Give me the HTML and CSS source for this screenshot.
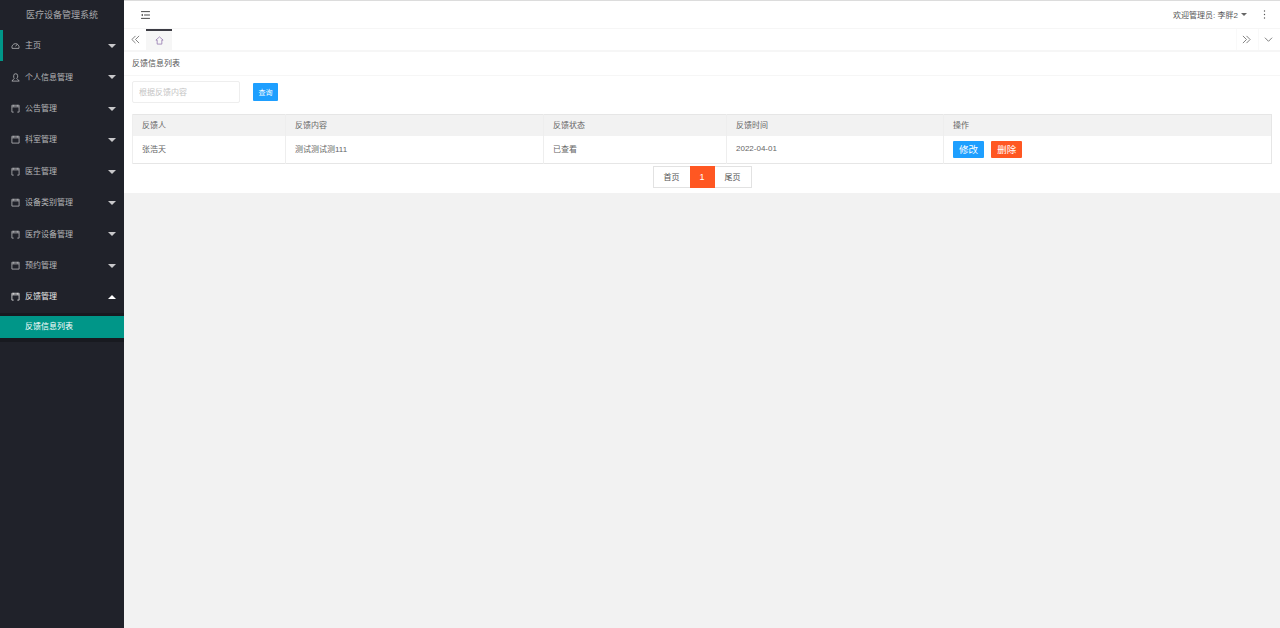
FILE: index.html
```html
<!DOCTYPE html>
<html lang="zh-CN">
<head>
    <meta charset="UTF-8">
    <title>医疗设备管理系统</title>
    <link rel="stylesheet" href="styles.css">
</head>
<body>
    <div class="app">
        <!-- Left menu -->
        <aside class="side">
            <div class="logo">医疗设备管理系统</div>
            <ul class="nav">
                <li class="nav-item first">
                    <svg class="nav-icon" viewBox="0 0 10 10"><path d="M1.200 8.200a4 4 0 1 1 7.600 0zM5 6l2-2.400"/></svg>
                    <span>主页</span><i class="caret"></i>
                </li>
                <li class="nav-item">
                    <svg class="nav-icon" viewBox="0 0 10 10"><path d="M3 4.800V3a2.200 2.200 0 0 1 4.400 0v1.600L6.400 6l2.800 3H1l2.600-3z"/></svg>
                    <span>个人信息管理</span><i class="caret"></i>
                </li>
                <li class="nav-item">
                    <svg class="nav-icon" viewBox="0 0 10 10"><path d="M1 9V1.400M9 9V1.400M1 1.400h8M1 3.200h8M3 1v2M7 1v2M1 9h2M7 9h2"/></svg>
                    <span>公告管理</span><i class="caret"></i>
                </li>
                <li class="nav-item">
                    <svg class="nav-icon" viewBox="0 0 10 10"><path d="M1 9V1.400h8V9zM1 3.200h8M3 1v2M7 1v2"/></svg>
                    <span>科室管理</span><i class="caret"></i>
                </li>
                <li class="nav-item">
                    <svg class="nav-icon" viewBox="0 0 10 10"><path d="M1 9V1.400M9 9V1.400M1 1.400h8M1 3.200h8M3 1v2M7 1v2M1 9h2M7 9h2"/></svg>
                    <span>医生管理</span><i class="caret"></i>
                </li>
                <li class="nav-item">
                    <svg class="nav-icon" viewBox="0 0 10 10"><path d="M1 9V1.400h8V9zM1 3.200h8M3 1v2M7 1v2"/></svg>
                    <span>设备类别管理</span><i class="caret"></i>
                </li>
                <li class="nav-item">
                    <svg class="nav-icon" viewBox="0 0 10 10"><path d="M1 9V1.400M9 9V1.400M1 1.400h8M1 3.200h8M3 1v2M7 1v2M1 9h2M7 9h2"/></svg>
                    <span>医疗设备管理</span><i class="caret"></i>
                </li>
                <li class="nav-item">
                    <svg class="nav-icon" viewBox="0 0 10 10"><path d="M1 9V1.400h8V9zM1 3.200h8M3 1v2M7 1v2"/></svg>
                    <span>预约管理</span><i class="caret"></i>
                </li>
                <li class="nav-item open">
                    <svg class="nav-icon" viewBox="0 0 10 10"><path d="M1 9V1.400M9 9V1.400M1 1.400h8M1 3.200h8M3 1v2M7 1v2M1 9h2M7 9h2"/></svg>
                    <span>反馈管理</span><i class="caret up"></i>
                </li>
                <li class="sub-nav">
                    <div class="sub-item">反馈信息列表</div>
                </li>
            </ul>
        </aside>

        <div class="main">
            <!-- Top bar -->
            <header class="topbar">
                <svg class="fold" viewBox="0 0 10 9"><path d="M0 .7h10M3.400 4.500h6.600M0 8.300h10"/><path class="fold-tip" d="M0 4.500l2-1.500v3z"/></svg>
                <div class="user">
                    <span>欢迎管理员: 李胖2</span><i class="caret small"></i>
                    <svg class="more" viewBox="0 0 3 9"><circle cx="1.500" cy="1" r=".7"/><circle cx="1.500" cy="4.500" r=".7"/><circle cx="1.500" cy="8" r=".7"/></svg>
                </div>
            </header>

            <!-- Tabs -->
            <div class="tabs">
                <div class="tab-arrow">
                    <svg viewBox="0 0 10 10"><path d="M5 1 1 5l4 4M9 1 5 5l4 4"/></svg>
                </div>
                <div class="tab-home">
                    <svg viewBox="0 0 10 10"><path d="M5 1 1 4.600h1.400V9h5.200V4.600H9z"/></svg>
                </div>
                <div class="tabs-right">
                    <div class="tab-btn">
                        <svg viewBox="0 0 10 10"><path d="M1 1l4 4-4 4M5 1l4 4-4 4"/></svg>
                    </div>
                    <div class="tab-btn">
                        <svg viewBox="0 0 10 10"><path d="M1 3l4 4 4-4"/></svg>
                    </div>
                </div>
            </div>

            <!-- Feedback list -->
            <section class="card">
                <div class="card-title">反馈信息列表</div>
                <div class="card-body">
                    <div class="search">
                        <input class="search-input" type="text" placeholder="根据反馈内容">
                        <button class="btn btn-search">查询</button>
                    </div>
                    <table class="list">
                        <colgroup>
                            <col class="col-1">
                            <col class="col-2">
                            <col class="col-3">
                            <col class="col-4">
                            <col>
                        </colgroup>
                        <thead>
                            <tr>
                                <th>反馈人</th>
                                <th>反馈内容</th>
                                <th>反馈状态</th>
                                <th>反馈时间</th>
                                <th>操作</th>
                            </tr>
                        </thead>
                        <tbody>
                            <tr>
                                <td>张浩天</td>
                                <td>测试测试测111</td>
                                <td>已查看</td>
                                <td>2022-04-01</td>
                                <td>
                                    <button class="btn btn-edit">修改</button>
                                    <button class="btn btn-del">删除</button>
                                </td>
                            </tr>
                        </tbody>
                    </table>
                    <div class="pager">
                        <a class="page-link first-page">首页</a>
                        <a class="page-link current">1</a>
                        <a class="page-link last-page">尾页</a>
                    </div>
                </div>
            </section>
        </div>
    </div>
</body>
</html>
```
FILE: styles.css
```css
* {
    box-sizing: border-box;
}
html, body {
    height: 100%;
}
body {
    margin: 0;
    font-family: "Liberation Sans", "Noto Sans CJK SC", sans-serif;
    font-size: 8px;
    color: #666;
    background: #f2f2f2;
}
ul {
    list-style: none;
    margin: 0;
    padding: 0;
}
svg {
    display: block;
    fill: none;
    stroke: currentColor;
}
.app {
    display: flex;
    height: 628px;
    overflow: hidden;
}

/* Left menu */
.side {
    width: 124px;
    flex: none;
    background: #20222a;
    color: #b5b6b8;
}
.logo {
    height: 30px;
    line-height: 30px;
    text-align: center;
    font-size: 9px;
    color: #a9aaad;
}
.nav-item {
    position: relative;
    display: flex;
    align-items: center;
    height: 31.4px;
    padding-left: 11px;
}
.nav-item span {
    padding-bottom: 2px;
}
.nav-item.first {
    box-shadow: inset 3px 0 0 #009688;
}
.nav-item.open {
    color: #e8e8e8;
}
.nav-icon {
    width: 9px;
    height: 9px;
    margin-right: 5px;
    stroke-width: 0.9;
}
.caret {
    position: absolute;
    right: 8px;
    top: 14px;
    border: 4px solid transparent;
    border-top: 4px solid #c8c8ca;
    border-bottom: 0;
}
.caret.up {
    border-top: 0;
    border-bottom: 4px solid #fff;
}
.sub-nav {
    padding: 3.5px 0;
    background: #181a20;
}
.sub-item {
    height: 22px;
    line-height: 22px;
    padding-left: 25px;
    background: #009688;
    color: #fff;
}

/* Top bar */
.main {
    flex: 1;
    min-width: 0;
    display: flex;
    flex-direction: column;
}
.topbar {
    display: flex;
    justify-content: space-between;
    align-items: center;
    height: 29px;
    padding-left: 17px;
    background: #fff;
    border-top: 1px solid #dcdcdc;
    border-bottom: 1px solid #f6f6f6;
    color: #333;
}
.fold {
    width: 9px;
    height: 8px;
    stroke-width: 1;
}
.fold-tip {
    fill: currentColor;
    stroke: none;
}
.user {
    display: flex;
    align-items: center;
    color: #555;
}
.user .caret.small {
    position: static;
    margin-left: 3px;
    border-width: 3.5px;
    border-top-color: #666;
    border-bottom: 0;
}
.more {
    width: 3px;
    height: 9px;
    margin: 0 14px 0 16px;
    fill: #555;
    stroke: none;
}

/* Tabs */
.tabs {
    display: flex;
    align-items: stretch;
    height: 23px;
    background: #fff;
    border-bottom: 2px solid #f6f6f6;
    color: #666;
}
.tab-arrow {
    width: 22px;
    display: flex;
    align-items: center;
    justify-content: center;
}
.tab-arrow svg, .tab-btn svg {
    width: 9px;
    height: 9px;
    stroke-width: 0.9;
}
.tab-home {
    width: 26px;
    display: flex;
    align-items: center;
    justify-content: center;
    background: #f6f6f6;
    border-top: 2px solid #3c3c44;
    color: #8a6ca8;
}
.tab-home svg {
    width: 9px;
    height: 9px;
    stroke-width: 0.8;
}
.tabs-right {
    display: flex;
    margin-left: auto;
}
.tab-btn {
    width: 22px;
    padding-right: 2px;
    display: flex;
    align-items: center;
    justify-content: center;
    border-left: 1px solid #f9f9f9;
}

/* Feedback list */
.card {
    height: 141px;
    background: #fff;
}
.card-title {
    height: 24px;
    line-height: 24px;
    padding-left: 8px;
    border-bottom: 1px solid #f6f6f6;
    color: #555;
}
.card-body {
    padding: 5px 8px 0;
}
.search {
    display: flex;
    align-items: center;
    height: 22px;
}
.search-input {
    width: 108px;
    height: 22px;
    padding: 0 6px;
    border: 1px solid #eee;
    border-radius: 2px;
    outline: none;
    font: inherit;
}
.search-input::placeholder {
    color: #c4c4c4;
}
.btn {
    border: 0;
    border-radius: 1px;
    padding: 0;
    color: #fff;
    font-family: inherit;
}
.btn-search {
    width: 25px;
    height: 18px;
    margin-left: 13px;
    font-size: 7px;
    background: #1e9fff;
}
.list {
    width: 1140px;
    margin-top: 11px;
    border-collapse: collapse;
    table-layout: fixed;
    border: 1px solid #e6e6e6;
}
.col-1 {
    width: 153px;
}
.col-2 {
    width: 258px;
}
.col-3 {
    width: 183px;
}
.col-4 {
    width: 217px;
}
.list th, .list td {
    padding: 0 9px 2px;
    border-left: 1px solid #eee;
    text-align: left;
    font-weight: 400;
}
.list th {
    height: 21px;
    background: #f2f2f2;
}
.list td {
    height: 28px;
}
.btn-edit, .btn-del {
    width: 31px;
    height: 17px;
    margin-top: 2px;
    font-size: 9.5px;
    vertical-align: middle;
}
.btn-edit {
    background: #1e9fff;
}
.btn-del {
    margin-left: 5px;
    background: #ff5722;
}
.pager {
    display: flex;
    justify-content: center;
    margin-top: 2px;
}
.page-link {
    height: 22px;
    line-height: 21px;
    text-align: center;
    background: #fff;
    border: 1px solid #e2e2e2;
    color: #555;
}
.first-page {
    width: 37px;
    border-right: 0;
}
.last-page {
    width: 37px;
    border-left: 0;
}
.current {
    width: 25px;
    border: 0;
    line-height: 22px;
    font-size: 9px;
    background: #ff5722;
    color: #fff;
}
```
